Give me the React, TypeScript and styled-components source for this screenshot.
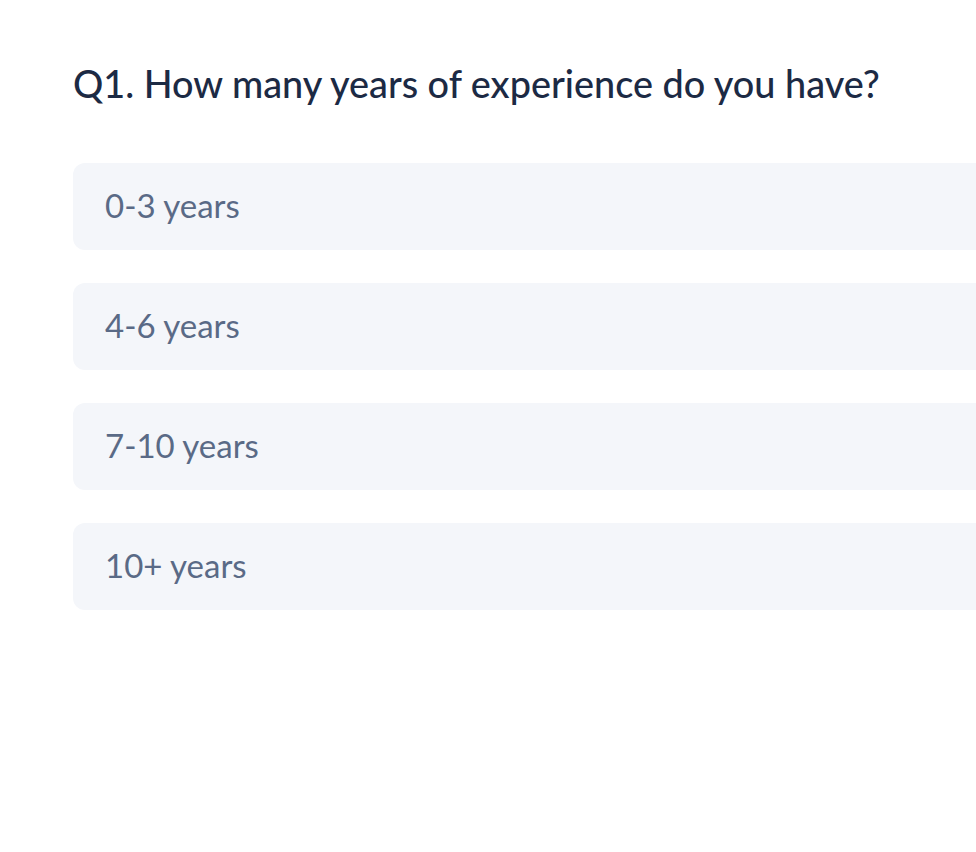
import styled, { createGlobalStyle } from 'styled-components';

const GlobalStyle = createGlobalStyle`
  html, body {
    margin: 0;
    padding: 0;
    background: #ffffff;
    overflow: hidden;
  }
  body {
    font-family: Lato, "Noto Sans", sans-serif;
  }
`;

const Page = styled.div`
  width: 976px;
  height: 852px;
  overflow: hidden;
  padding: 58px 0 0 73px;
  box-sizing: border-box;
`;

const Question = styled.h2`
  margin: 0;
  font-size: 37.8px;
  line-height: 52px;
  font-weight: 500;
  color: #1c2a44;
`;

const OptionList = styled.div`
  margin-top: 53px;
  display: flex;
  flex-direction: column;
  gap: 33px;
  width: 1000px;
`;

const Option = styled.button`
  display: flex;
  align-items: center;
  height: 87px;
  padding: 0 0 3px 32px;
  border: none;
  border-radius: 12px;
  background: #f4f6fa;
  color: #5a6a86;
  font-family: inherit;
  font-size: 33px;
  text-align: left;
  cursor: pointer;
`;

const options = ['0-3 years', '4-6 years', '7-10 years', '10+ years'];

const App = () => (
  <>
    <GlobalStyle />
    <Page>
      <Question>Q1. How many years of experience do you have?</Question>
      <OptionList>
        {options.map((o) => (
          <Option key={o}>{o}</Option>
        ))}
      </OptionList>
    </Page>
  </>
);

export default App;
